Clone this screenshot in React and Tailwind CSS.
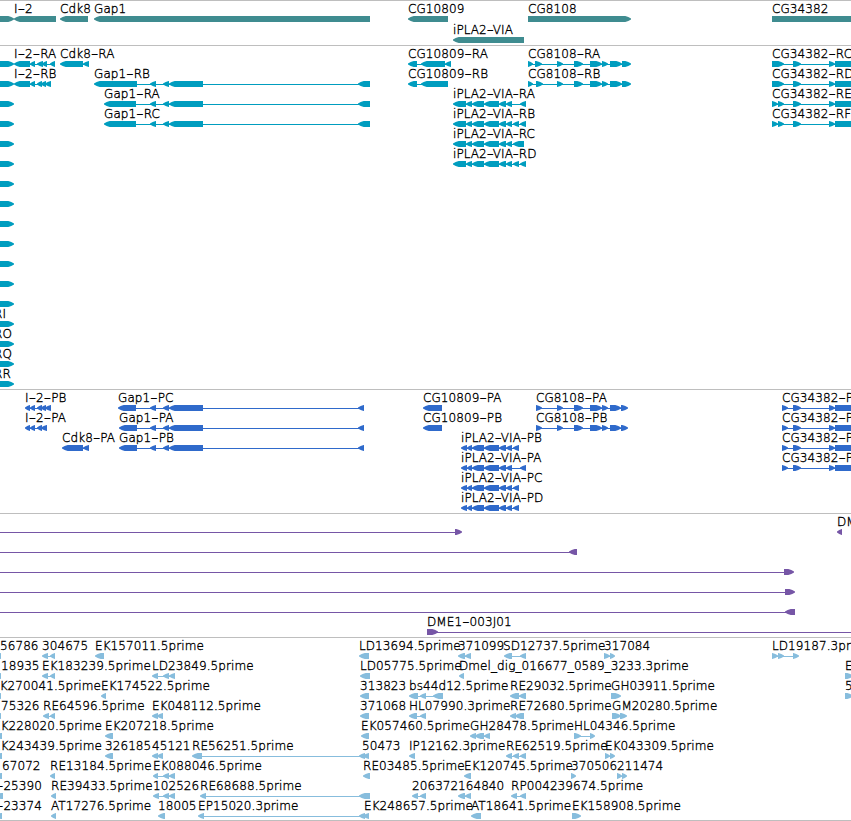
import React from "react";

const L = "left";
const R = "right";

// feature: [row, direction, label, labelX, exons]
const genes = [
  [0, R, "", 0, [[-20, 14]]],
  [0, L, "I-2", 14, [[14, 56]]],
  [0, L, "Cdk8", 60, [[60, 88]]],
  [0, L, "Gap1", 94, [[94, 370]]],
  [0, L, "CG10809", 408, [[408, 448]]],
  [1.05, L, "iPLA2-VIA", 453, [[453, 524]]],
  [0, R, "CG8108", 528, [[528, 631]]],
  [0, R, "CG34382", 772, [[772, 880]]],
];

const gapTail = [[150, 156], [163, 169], [169, 203], [358, 370]];
const gapCds = [[150, 156], [163, 169], [169, 203], [358, 364]];
const plaHead = [[453, 466], [466, 472], [472, 484], [484, 499], [499, 506], [506, 512]];
const plaCds = [[461, 467], [467, 472], [472, 484], [484, 499], [499, 506], [506, 512]];
const cg8108Tail = [[557, 563], [574, 583], [590, 602], [602, 608], [610, 622], [622, 631]];
const cg8108Cds = [[536, 542], [557, 563], [574, 583], [590, 602], [602, 608], [610, 621], [621, 628]];
const cg34382Tail = [[793, 801], [829, 835], [835, 880]];
const cg34382Cds = [[782, 788], ...cg34382Tail];

const leftLabels = { 13: "RI", 14: "RO", 15: "RQ", 16: "RR" };

const transcripts = [
  ...Array.from({ length: 17 }, (_, i) => [i, R, leftLabels[i] || "", -6, [[-20, 14]]]),
  [0, L, "I-2-RA", 14, [[14, 30], [30, 35], [37, 43], [42, 47], [50, 55]]],
  [1, L, "I-2-RB", 14, [[14, 30], [30, 35], [37, 42], [41, 46], [45, 51]]],
  [0, L, "Cdk8-RA", 60, [[60, 83], [83, 89]]],
  [1, L, "Gap1-RB", 94, [[94, 137], ...gapTail]],
  [2, L, "Gap1-RA", 104, [[104, 136], ...gapTail]],
  [3, L, "Gap1-RC", 104, [[104, 136], ...gapTail]],
  [0, L, "CG10809-RA", 408, [[408, 417], [421, 445], [445, 451]]],
  [1, L, "CG10809-RB", 408, [[408, 417], [421, 448]]],
  [2, L, "iPLA2-VIA-RA", 453, [...plaHead, [520, 526]]],
  [3, L, "iPLA2-VIA-RB", 453, [...plaHead, [513, 519], [520, 526]]],
  [4, L, "iPLA2-VIA-RC", 453, [...plaHead, [513, 524]]],
  [5, L, "iPLA2-VIA-RD", 453, [...plaHead, [513, 519], [520, 526]]],
  [0, R, "CG8108-RA", 528, [[528, 533], [535, 542], ...cg8108Tail]],
  [1, R, "CG8108-RB", 528, [[528, 533], [536, 543], ...cg8108Tail]],
  [0, R, "CG34382-RC", 772, [[772, 784], ...cg34382Tail]],
  [1, R, "CG34382-RD", 772, [[772, 784], ...cg34382Tail]],
  [2, R, "CG34382-RE", 772, [[772, 778], [778, 784], ...cg34382Tail]],
  [3, R, "CG34382-RF", 772, [[772, 778], [778, 784], ...cg34382Tail]],
];

const proteins = [
  [0, L, "I-2-PB", 25, [[25, 30], [30, 35], [37, 42], [41, 46], [45, 51]]],
  [1, L, "I-2-PA", 25, [[25, 30], [30, 35], [37, 42], [41, 47]]],
  [2, L, "Cdk8-PA", 62, [[62, 83], [83, 89]]],
  [0, L, "Gap1-PC", 118, [[118, 136], ...gapCds]],
  [1, L, "Gap1-PA", 119, [[119, 137], ...gapCds]],
  [2, L, "Gap1-PB", 119, [[119, 137], ...gapCds]],
  [0, L, "CG10809-PA", 423, [[423, 442]]],
  [1, L, "CG10809-PB", 423, [[423, 442]]],
  [2, L, "iPLA2-VIA-PB", 461, [...plaCds, [513, 519]]],
  [3, L, "iPLA2-VIA-PA", 461, [...plaCds, [520, 526]]],
  [4, L, "iPLA2-VIA-PC", 461, [...plaCds, [513, 519]]],
  [5, L, "iPLA2-VIA-PD", 461, [...plaCds, [513, 519]]],
  [0, R, "CG8108-PA", 536, cg8108Cds],
  [1, R, "CG8108-PB", 536, cg8108Cds],
  [0, R, "CG34382-P", 782, cg34382Cds],
  [1, R, "CG34382-P", 782, cg34382Cds],
  [2, R, "CG34382-P", 782, cg34382Cds],
  [3, R, "CG34382-P", 782, cg34382Cds],
];

const bacs = [
  [0, R, "", 0, [[-20, -10], [455, 462]]],
  [1, L, "", 0, [[-20, -10], [569, 577]]],
  [2, R, "", 0, [[-20, -10], [784, 794]]],
  [3, R, "", 0, [[-20, -10], [785, 795]]],
  [4, L, "", 0, [[-20, -10], [785, 795]]],
  [5, R, "DME1-003J01", 427, [[427, 438], [870, 880]]],
  [0, L, "DM", 837, [[837, 842]]],
];

const ests = [
  [0, L, "56786", 0, [[-5, 1]]],
  [0, L, "304675", 42, [[42, 48], [50, 55]]],
  [0, L, "EK157011.5prime", 95, [[95, 104]]],
  [0, L, "LD13694.5prime", 359, [[359, 369]]],
  [0, L, "371099", 458, [[458, 465], [465, 471]]],
  [0, L, "SD12737.5prime", 503, [[504, 512], [520, 526]]],
  [0, R, "317084", 604, [[604, 610], [610, 615]]],
  [0, R, "LD19187.3prime", 772, [[772, 778], [778, 784], [793, 799]]],
  [1, L, "18935", 1, [[-5, 1]]],
  [1, L, "EK183239.5prime", 42, [[42, 48], [50, 55]]],
  [1, L, "LD23849.5prime", 152, [[152, 158], [163, 169], [169, 175]]],
  [1, L, "LD05775.5prime", 360, [[360, 370]]],
  [1, L, "Dmel_dig_016677_0589_3233.3prime", 459, [[459, 464]]],
  [1, R, "E", 845, [[845, 853]]],
  [2, L, "EK270041.5prime", -8, [[-5, 1]]],
  [2, L, "EK174522.5prime", 101, [[101, 106]]],
  [2, L, "313823", 360, [[360, 369]]],
  [2, L, "bs44d12.5prime", 409, [[409, 418], [420, 426], [433, 443]]],
  [2, L, "RE29032.5prime", 510, [[510, 519], [519, 526]]],
  [2, R, "GH03911.5prime", 611, [[611, 621]]],
  [2, R, "5", 845, [[845, 853]]],
  [3, L, "75326", 1, [[-5, 1]]],
  [3, L, "RE64596.5prime", 43, [[43, 49], [50, 55]]],
  [3, L, "EK048112.5prime", 152, [[152, 158], [157, 163]]],
  [3, L, "371068", 360, [[360, 369]]],
  [3, L, "HL07990.3prime", 409, [[409, 417], [420, 426]]],
  [3, L, "RE72680.5prime", 510, [[510, 516], [515, 524]]],
  [3, R, "GM20280.5prime", 612, [[612, 621], [620, 627]]],
  [4, L, "EK228020.5prime", -7, [[-5, 2]]],
  [4, L, "EK207218.5prime", 105, [[105, 113]]],
  [4, L, "EK057460.5prime", 361, [[361, 369]]],
  [4, L, "GH28478.5prime", 470, [[470, 476], [475, 484], [484, 490]]],
  [4, R, "HL04346.5prime", 574, [[574, 581], [590, 595]]],
  [5, L, "EK243439.5prime", -7, [[-5, 2]]],
  [5, L, "326185", 105, [[105, 113]]],
  [5, L, "45121", 152, [[152, 158], [157, 163]]],
  [5, L, "RE56251.5prime", 192, [[192, 202], [359, 365], [363, 369]]],
  [5, L, "50473", 362, []],
  [5, L, "IP12162.3prime", 409, [[409, 415]]],
  [5, L, "RE62519.5prime", 506, [[506, 512], [513, 519], [520, 526]]],
  [5, R, "EK043309.5prime", 605, [[605, 610], [610, 615]]],
  [6, L, "67072", 2, [[-5, 2]]],
  [6, L, "RE13184.5prime", 50, [[50, 55]]],
  [6, L, "EK088046.5prime", 153, [[153, 158], [163, 169], [169, 175]]],
  [6, L, "RE03485.5prime", 363, [[363, 370]]],
  [6, L, "EK120745.5prime", 464, [[464, 471]]],
  [6, R, "370506", 571, [[571, 576]]],
  [6, R, "211474", 617, [[617, 622], [622, 627]]],
  [7, L, "-25390", -4, [[-5, 3]]],
  [7, L, "RE39433.5prime", 51, [[51, 56]]],
  [7, L, "102526", 153, [[153, 159], [163, 169], [169, 175]]],
  [7, L, "RE68688.5prime", 200, [[200, 206], [359, 370]]],
  [7, L, "206372", 412, [[412, 418], [420, 426]]],
  [7, L, "164840", 458, [[458, 465], [465, 471]]],
  [7, L, "RP004239674.5prime", 511, [[511, 517], [520, 526]]],
  [8, L, "-23374", -4, [[-5, 2]]],
  [8, L, "AT17276.5prime", 51, [[51, 56]]],
  [8, L, "18005", 158, [[158, 165]]],
  [8, L, "EP15020.3prime", 198, [[198, 204], [359, 365], [363, 369]]],
  [8, L, "EK248657.5prime", 364, []],
  [8, L, "AT18641.5prime", 471, [[471, 481]]],
  [8, R, "EK158908.5prime", 572, [[572, 581]]],
];

// blunt arrow, 6px high, pointing along the strand
function exonPoints([x1, x2], y, dir) {
  const head = Math.min(6, x2 - x1);
  const [tip, tail, s] = dir === L ? [x1, x2, 1] : [x2, x1, -1];
  const mid = tip + s * head * 0.45;
  const neck = tip + s * head * 0.95;
  return [
    [tip, y + 2.5],
    [mid, y + 1.1],
    [neck, y],
    [tail, y],
    [tail, y + 6],
    [neck, y + 6],
    [mid, y + 4.9],
    [tip, y + 3.5],
  ].join(" ");
}

function Label({ x, y, children }) {
  const dash = children.includes("VIA") ? 6 : 7.4;
  return (
    <text x={x} y={y} className="fill-black">
      {children.split(/(-)/).filter(Boolean).map((part, i) =>
        part === "-" ? (
          <tspan key={i} textLength={dash} lengthAdjust="spacingAndGlyphs">
            -
          </tspan>
        ) : (
          part
        )
      )}
    </text>
  );
}

function Feature({ feature, top }) {
  const [row, dir, label, labelX, exons] = feature;
  const y = top + Math.round(row * 20);
  return (
    <g>
      {exons.length > 1 && (
        <rect
          x={exons[0][0] + 1}
          y={y + 3}
          width={exons[exons.length - 1][1] - exons[0][0] - 2}
          height="1"
        />
      )}
      {exons.map((exon, i) => (
        <polygon key={i} points={exonPoints(exon, y, dir)} />
      ))}
      {label && (
        <Label x={labelX} y={y - 3}>
          {label}
        </Label>
      )}
    </g>
  );
}

function Track({ name, features, top, className }) {
  return (
    <section aria-label={name} className={`w-full shrink-0 overflow-hidden border-t border-[#bebebe] ${className}`}>
      <svg width="851" height="100%" className="block text-[12px] font-extralight tracking-[0.08px] [&_text]:stroke-black [&_text]:[stroke-width:0.35px]">
        {features.map((feature, i) => (
          <Feature key={i} feature={feature} top={top} />
        ))}
      </svg>
    </section>
  );
}

export default function App() {
  return (
    <main className="flex h-[821px] w-[851px] flex-col overflow-hidden border-b border-[#bebebe] bg-white font-['DejaVu_Sans',sans-serif]">
      <Track name="Genes" features={genes} top={15} className="h-[45px] fill-[#3f8c90]" />
      <Track name="Transcripts" features={transcripts} top={15} className="h-[344px] fill-[#009dbf]" />
      <Track name="Proteins" features={proteins} top={15} className="h-[124px] fill-[#2f6acb]" />
      <Track name="Clones" features={bacs} top={15} className="h-[124px] fill-[#7656a6]" />
      <Track name="ESTs" features={ests} top={15} className="h-[183px] fill-[#87bddd]" />
    </main>
  );
}
